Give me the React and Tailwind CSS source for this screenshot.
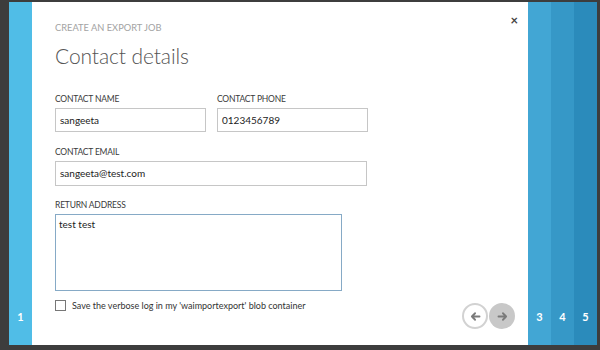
import React from 'react';

const font = { fontFamily: 'Lato, "Open Sans", sans-serif' };

// small arrow used by the wizard nav buttons
const Arrow = ({ dir }) => (
  <svg width="13" height="13" viewBox="0 0 16 16" fill="none" stroke="#7a7a7a" strokeWidth="2.2" strokeLinecap="round" strokeLinejoin="round">
    {dir === 'left' ? (
      <path d="M13 8H3.5M7.5 4L3.5 8l4 4" />
    ) : (
      <path d="M3 8h9.5M8.5 4l4 4-4 4" />
    )}
  </svg>
);

const Label = ({ children }) => (
  <div className="text-[8.5px] leading-[12px] text-[#3a3a3a] tracking-[-0.2px]">{children}</div>
);

const Field = ({ value, className }) => (
  <div className={`border border-[#c6c6c6] h-[24px] px-[4px] flex items-center text-[10px] text-[#222] ${className}`}>{value}</div>
);

const StepCol = ({ n, bg }) => (
  <div className={`w-[23px] flex flex-col justify-end items-center pb-[22px] ${bg}`}>
    <span className="text-white font-bold text-[11px] leading-[12px]">{n}</span>
  </div>
);

export default function App() {
  return (
    <div style={font} className="w-[600px] h-[350px] bg-[#3d3d3d] flex pt-[2px] pl-[9px] pr-[3px] pb-[5px] overflow-hidden">
      <StepCol n="1" bg="bg-[#50bde7]" />

      <div className="flex-1 bg-white relative flex flex-col pl-[23px] pr-[13px] pt-[20px]">
        <button className="absolute right-[10px] top-[11px] text-[#444] text-[13px] leading-[14px] font-bold">×</button>

        <div className="text-[9.3px] leading-[12px] text-[#a3a3a3]">CREATE AN EXPORT JOB</div>
        <div className="text-[21px] leading-[28px] font-light text-[#555] tracking-[-0.1px] mt-[8px]">Contact details</div>

        <div className="flex gap-[11px] mt-[23px]">
          <div className="flex flex-col gap-[3px]">
            <Label>CONTACT NAME</Label>
            <Field value="sangeeta" className="w-[151px]" />
          </div>
          <div className="flex flex-col gap-[3px]">
            <Label>CONTACT PHONE</Label>
            <Field value="0123456789" className="w-[151px]" />
          </div>
        </div>

        <div className="flex flex-col gap-[3px] mt-[14px]">
          <Label>CONTACT EMAIL</Label>
          <Field value="sangeeta@test.com" className="w-[312px] h-[25px]" />
        </div>

        <div className="flex flex-col gap-[3px] mt-[13px]">
          <Label>RETURN ADDRESS</Label>
          <div className="w-[287px] h-[77px] border border-[#86aac6] px-[3px] pt-[2px] text-[10px] text-[#222]">test test</div>
        </div>

        <div className="flex justify-between items-start mt-[8px]">
          <label className="flex items-center gap-[6px] text-[9px] text-[#333]">
            <span className="w-[11px] h-[11px] border border-[#777] bg-white inline-block" />
            Save the verbose log in my 'waimportexport' blob container
          </label>
          <div className="flex gap-[1px] mt-[4px]">
            <button className="w-[26px] h-[26px] rounded-full border-2 border-[#d2d2d2] bg-white flex items-center justify-center">
              <Arrow dir="left" />
            </button>
            <button className="w-[26px] h-[26px] rounded-full bg-[#c8c8c8] flex items-center justify-center">
              <Arrow dir="right" />
            </button>
          </div>
        </div>
      </div>

      <StepCol n="3" bg="bg-[#42a6d4]" />
      <StepCol n="4" bg="bg-[#3698c7]" />
      <StepCol n="5" bg="bg-[#2b8bbb]" />
    </div>
  );
}
